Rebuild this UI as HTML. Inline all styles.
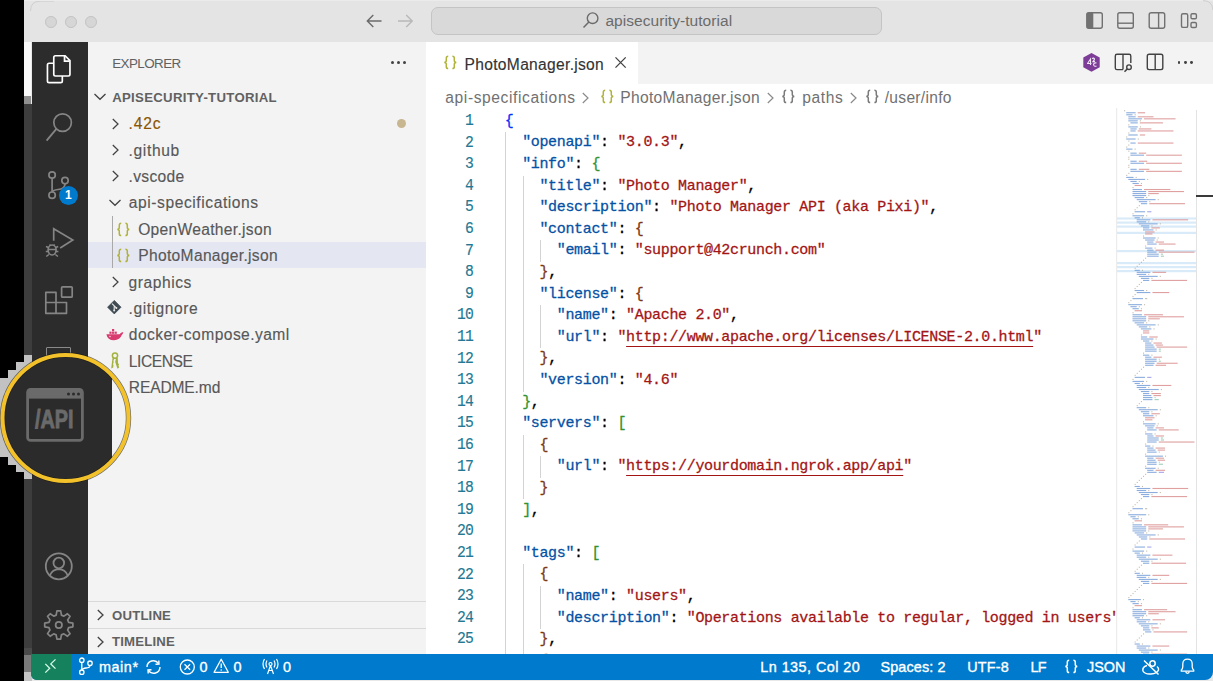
<!DOCTYPE html>
<html><head><meta charset="utf-8">
<style>
*{margin:0;padding:0;box-sizing:border-box}
html,body{width:1213px;height:681px;overflow:hidden;background:#e8e8e8;font-family:"Liberation Sans",sans-serif}
.a{position:absolute}
#black{left:0;top:0;width:24px;height:681px;background:#000}
#title{left:24px;top:0;width:1189px;height:41.5px;background:#e4e4e4}
#strip1{left:24px;top:42px;width:7px;height:55px;background:#fafafa}
#strip2{left:24px;top:96px;width:7px;height:8px;background:#8f8f8f}
#strip3{left:24px;top:104px;width:8px;height:544px;background:#3d3d3d}
#strip4{left:24px;top:648px;width:8px;height:7px;background:#4a4a4a}
#strip5{left:24px;top:655px;width:8px;height:17px;background:#7a7a7a}
#strip6{left:24px;top:672px;width:8px;height:9px;background:#c4c4c4}
#act{left:32px;top:42px;width:56px;height:612px;background:#2c2c2c}
#side{left:88px;top:42px;width:338px;height:612px;background:#f3f3f3}
#editor{left:426px;top:42px;width:787px;height:612px;background:#fff}
#tabs{left:426px;top:42px;width:787px;height:42px;background:#f3f3f3}
#tab{left:426px;top:42px;width:212px;height:42px;background:#fff}
.ln{position:absolute;left:440px;width:32.9px;text-align:right;font-family:"Liberation Mono",monospace;font-size:16px;letter-spacing:-0.9px;line-height:21.6px;height:21.6px;color:#237893;-webkit-text-stroke:0.15px currentColor;transform:scaleX(0.92);transform-origin:100% 50%}
.cl{position:absolute;left:504.8px;font-family:"Liberation Mono",monospace;font-size:15px;letter-spacing:-0.34px;line-height:21.6px;height:21.6px;white-space:pre;color:#000;-webkit-text-stroke:0.28px currentColor}
.k{color:#0451a5} .s{color:#a31515} .su{color:#a31515;text-decoration:underline;text-underline-offset:4.5px;text-decoration-thickness:1px}
.b1{color:#0431fa} .b2{color:#319331} .b3{color:#7b3814} .p{color:#000}
.ig{position:absolute;width:1px;background:#d3d3d3}
#status{left:30.5px;top:654px;width:1182.5px;height:25.5px;background:#007acc;border-bottom-right-radius:8px;border-bottom-left-radius:6px}
#remote{left:30.5px;top:654px;width:40.5px;height:25.5px;background:#16825d;border-bottom-left-radius:6px}
.st{position:absolute;top:658.5px;color:#fff;font-size:14.4px;line-height:17px;white-space:pre;-webkit-text-stroke:0.35px #fff}
.row{position:absolute;height:26.4px;font-size:15.6px;line-height:26.4px;color:#585858;white-space:pre;-webkit-text-stroke:0.15px currentColor}
</style></head><body>
<div class="a" id="black"></div>
<div class="a" id="title"></div>
<div class="a" style="left:45.0px;top:16px;width:11.8px;height:11.8px;border-radius:50%;background:#d6d6d6;border:1px solid #c2c2c2"></div>
<div class="a" style="left:65.1px;top:16px;width:11.8px;height:11.8px;border-radius:50%;background:#d6d6d6;border:1px solid #c2c2c2"></div>
<div class="a" style="left:85.0px;top:16px;width:11.8px;height:11.8px;border-radius:50%;background:#d6d6d6;border:1px solid #c2c2c2"></div>
<svg class="a" style="left:24px;top:0px" width="30" height="20" viewBox="0 0 30 20"><path d="M6.5 11 Q6.5 1.2 16 1.2 L30 1.2" fill="none" stroke="#cfcfcf" stroke-width="1"/></svg>
<div class="a" style="left:24px;top:0px;width:1189px;height:1px;background:#ebebeb"></div>
<svg class="a" style="left:1183px;top:0px" width="30" height="30" viewBox="0 0 30 30"><path d="M20 0.6 Q29.5 0.6 29.8 10" fill="none" stroke="#cfcfcf" stroke-width="1"/></svg>
<svg class="a" style="left:365px;top:13px" width="50" height="16" viewBox="0 0 50 16"><path d="M2.5 8 L16.5 8 M8.3 2 L2.3 8 L8.3 14" fill="none" stroke="#6b6b6b" stroke-width="1.4"/><path d="M33 8 L47 8 M41.2 2 L47.2 8 L41.2 14" fill="none" stroke="#b8b8b8" stroke-width="1.4"/></svg>
<div class="a" style="left:431px;top:7px;width:451px;height:28px;border-radius:7px;background:#d9d9d9;border:1px solid #c4c4c4"></div>
<svg class="a" style="left:582px;top:11px" width="18" height="18" viewBox="0 0 18 18"><circle cx="10.6" cy="7.2" r="5.3" fill="none" stroke="#6b6b6b" stroke-width="1.4"/><path d="M6.9 11 L1.5 16.6" stroke="#6b6b6b" stroke-width="1.5"/></svg>
<div class="a" style="left:605.4px;top:12px;font-size:15.5px;line-height:18px;color:#6b6b6b;letter-spacing:0.05px">apisecurity-tutorial</div>
<svg class="a" style="left:1080px;top:8px" width="125" height="26" viewBox="0 0 125 26"><rect x="6.8" y="4.8" width="15.5" height="15.5" rx="2" fill="none" stroke="#717171" stroke-width="1.4"/><rect x="6.8" y="4.8" width="6.5" height="15.5" rx="1" fill="#717171"/><rect x="37.8" y="4.8" width="15.5" height="15.5" rx="2" fill="none" stroke="#717171" stroke-width="1.4"/><path d="M37.8 15.2 L53.3 15.2" stroke="#717171" stroke-width="1.4"/><rect x="69.2" y="4.8" width="15.5" height="15.5" rx="2" fill="none" stroke="#717171" stroke-width="1.4"/><path d="M78.6 4.8 L78.6 20.3" stroke="#717171" stroke-width="1.4"/><rect x="101.5" y="5.8" width="6.2" height="13.6" rx="1.5" fill="none" stroke="#717171" stroke-width="1.4"/><rect x="111" y="5.8" width="5.4" height="5" rx="1.3" fill="none" stroke="#717171" stroke-width="1.4"/><rect x="111" y="14.5" width="5.4" height="5" rx="1.3" fill="none" stroke="#717171" stroke-width="1.4"/></svg>
<div class="a" id="strip1"></div><div class="a" id="strip2"></div><div class="a" id="strip3"></div><div class="a" id="strip4"></div><div class="a" id="strip5"></div><div class="a" id="strip6"></div>
<div class="a" id="act"></div>
<div class="a" id="side"></div>
<div class="a" id="editor"></div>
<div class="a" id="tabs"></div>
<div class="a" id="tab"></div>
<svg class="a" style="left:442.5px;top:54.9px" width="15" height="15" viewBox="0 0 15 15"><path d="M5.2 1.3 Q3.3 1.3 3.3 3.2 L3.3 5.6 Q3.3 7.3 1.3 7.4 Q3.3 7.5 3.3 9.2 L3.3 11.7 Q3.3 13.6 5.2 13.6" fill="none" stroke="#b0b33a" stroke-width="1.5"/><path d="M9.4 1.3 Q11.3 1.3 11.3 3.2 L11.3 5.6 Q11.3 7.3 13.3 7.4 Q11.3 7.5 11.3 9.2 L11.3 11.7 Q11.3 13.6 9.4 13.6" fill="none" stroke="#b0b33a" stroke-width="1.5"/></svg>
<div class="a" style="left:464.6px;top:55.8px;font-size:15.6px;line-height:18px;color:#333;letter-spacing:0.3px;-webkit-text-stroke:0.15px #333">PhotoManager.json</div>
<svg class="a" style="left:613px;top:55px" width="15" height="15" viewBox="0 0 15 15"><path d="M2.5 2.4 L12.7 12.6 M12.7 2.4 L2.5 12.6" stroke="#424242" stroke-width="1.3"/></svg>
<div class="a" style="left:445.3px;top:88.5px;font-size:15.6px;line-height:18px;color:#717171;letter-spacing:0.59px">api-specifications</div>
<svg class="a" style="left:581.0px;top:90.5px" width="10" height="14" viewBox="0 0 10 14"><path d="M1.8 2 L7 7 L1.8 12" fill="none" stroke="#8a8a8a" stroke-width="1.2"/></svg>
<svg class="a" style="left:599.5px;top:89.3px" width="15" height="15" viewBox="0 0 15 15"><path d="M5.2 1.3 Q3.3 1.3 3.3 3.2 L3.3 5.6 Q3.3 7.3 1.3 7.4 Q3.3 7.5 3.3 9.2 L3.3 11.7 Q3.3 13.6 5.2 13.6" fill="none" stroke="#b0b33a" stroke-width="1.5"/><path d="M9.4 1.3 Q11.3 1.3 11.3 3.2 L11.3 5.6 Q11.3 7.3 13.3 7.4 Q11.3 7.5 11.3 9.2 L11.3 11.7 Q11.3 13.6 9.4 13.6" fill="none" stroke="#b0b33a" stroke-width="1.5"/></svg>
<div class="a" style="left:620.3px;top:88.5px;font-size:15.6px;line-height:18px;color:#717171;letter-spacing:0.31px">PhotoManager.json</div>
<svg class="a" style="left:766.0px;top:90.5px" width="10" height="14" viewBox="0 0 10 14"><path d="M1.8 2 L7 7 L1.8 12" fill="none" stroke="#8a8a8a" stroke-width="1.2"/></svg>
<svg class="a" style="left:781.0px;top:89.3px" width="15" height="15" viewBox="0 0 15 15"><path d="M5.2 1.3 Q3.3 1.3 3.3 3.2 L3.3 5.6 Q3.3 7.3 1.3 7.4 Q3.3 7.5 3.3 9.2 L3.3 11.7 Q3.3 13.6 5.2 13.6" fill="none" stroke="#7a7a7a" stroke-width="1.5"/><path d="M9.4 1.3 Q11.3 1.3 11.3 3.2 L11.3 5.6 Q11.3 7.3 13.3 7.4 Q11.3 7.5 11.3 9.2 L11.3 11.7 Q11.3 13.6 9.4 13.6" fill="none" stroke="#7a7a7a" stroke-width="1.5"/></svg>
<div class="a" style="left:802.2px;top:88.5px;font-size:15.6px;line-height:18px;color:#717171;letter-spacing:0.6px">paths</div>
<svg class="a" style="left:849.0px;top:90.5px" width="10" height="14" viewBox="0 0 10 14"><path d="M1.8 2 L7 7 L1.8 12" fill="none" stroke="#8a8a8a" stroke-width="1.2"/></svg>
<svg class="a" style="left:864.5px;top:89.3px" width="15" height="15" viewBox="0 0 15 15"><path d="M5.2 1.3 Q3.3 1.3 3.3 3.2 L3.3 5.6 Q3.3 7.3 1.3 7.4 Q3.3 7.5 3.3 9.2 L3.3 11.7 Q3.3 13.6 5.2 13.6" fill="none" stroke="#7a7a7a" stroke-width="1.5"/><path d="M9.4 1.3 Q11.3 1.3 11.3 3.2 L11.3 5.6 Q11.3 7.3 13.3 7.4 Q11.3 7.5 11.3 9.2 L11.3 11.7 Q11.3 13.6 9.4 13.6" fill="none" stroke="#7a7a7a" stroke-width="1.5"/></svg>
<div class="a" style="left:884.7px;top:88.5px;font-size:15.6px;line-height:18px;color:#717171;letter-spacing:0.3px">/user/info</div>
<svg class="a" style="left:1082px;top:52px" width="20" height="21" viewBox="0 0 20 21"><path d="M9.5 1 L17.7 5.6 L17.7 15.2 L9.5 19.8 L1.3 15.2 L1.3 5.6 Z" fill="#7d3c98"/><path d="M5.5 11.5 L8.5 7 L8.5 13 M5 11.5 L9.5 11.5 M10 6.5 Q12 5.5 12.5 7 Q12 9 10.5 10 L13 9.5 M14.5 11 Q12 10.5 11.5 12.5 Q12 15 14.5 14" fill="none" stroke="#f0e6f5" stroke-width="1.1"/></svg>
<svg class="a" style="left:1113px;top:52px" width="22" height="22" viewBox="0 0 22 22"><path d="M17.8 11 L17.8 4 Q17.8 2.3 16.1 2.3 L4 2.3 Q2.3 2.3 2.3 4 L2.3 15.9 Q2.3 17.6 4 17.6 L10 17.6" fill="none" stroke="#424242" stroke-width="1.4"/><path d="M10 2.3 L10 17.6" stroke="#424242" stroke-width="1.4"/><circle cx="16" cy="15.2" r="2.3" fill="none" stroke="#424242" stroke-width="1.4"/><path d="M14.3 16.9 L11.5 19.7" stroke="#424242" stroke-width="1.5"/></svg>
<svg class="a" style="left:1145px;top:52px" width="20" height="20" viewBox="0 0 20 20"><rect x="2.3" y="2.3" width="15.5" height="15.3" rx="1.8" fill="none" stroke="#424242" stroke-width="1.4"/><path d="M10.2 2.3 L10.2 17.6" stroke="#424242" stroke-width="1.4"/></svg>
<div class="a" style="left:1177.7px;top:60.9px;width:2.8px;height:2.8px;border-radius:50%;background:#424242"></div>
<div class="a" style="left:1184.0px;top:60.9px;width:2.8px;height:2.8px;border-radius:50%;background:#424242"></div>
<div class="a" style="left:1190.2px;top:60.9px;width:2.8px;height:2.8px;border-radius:50%;background:#424242"></div>
<div class="ig" style="left:505.3px;top:132.3px;height:540.0px"></div>
<div class="ig" style="left:522.6px;top:175.5px;height:216.0px"></div>
<div class="ig" style="left:539.9px;top:240.3px;height:21.6px"></div>
<div class="ig" style="left:539.9px;top:305.1px;height:43.2px"></div>
<div class="ig" style="left:522.6px;top:434.7px;height:64.8px"></div>
<div class="ig" style="left:539.9px;top:456.3px;height:21.6px"></div>
<div class="ig" style="left:522.6px;top:564.3px;height:108.0px"></div>
<div class="ig" style="left:539.9px;top:585.9px;height:43.2px"></div>
<div class="ln" style="top:111.0px">1</div>
<div class="cl" style="top:110.7px"><span class="b1">{</span></div>
<div class="ln" style="top:132.6px">2</div>
<div class="cl" style="top:132.3px">  <span class="k">&quot;openapi&quot;</span><span class="p">: </span><span class="s">&quot;3.0.3&quot;</span><span class="p">,</span></div>
<div class="ln" style="top:154.2px">3</div>
<div class="cl" style="top:153.9px">  <span class="k">&quot;info&quot;</span><span class="p">: </span><span class="b2">{</span></div>
<div class="ln" style="top:175.8px">4</div>
<div class="cl" style="top:175.5px">    <span class="k">&quot;title&quot;</span><span class="p">: </span><span class="s">&quot;Photo Manager&quot;</span><span class="p">,</span></div>
<div class="ln" style="top:197.4px">5</div>
<div class="cl" style="top:197.1px">    <span class="k">&quot;description&quot;</span><span class="p">: </span><span class="s">&quot;Photo Manager API (aka Pixi)&quot;</span><span class="p">,</span></div>
<div class="ln" style="top:219.0px">6</div>
<div class="cl" style="top:218.7px">    <span class="k">&quot;contact&quot;</span><span class="p">: </span><span class="b3">{</span></div>
<div class="ln" style="top:240.6px">7</div>
<div class="cl" style="top:240.3px">      <span class="k">&quot;email&quot;</span><span class="p">: </span><span class="s">&quot;support@42crunch.com&quot;</span></div>
<div class="ln" style="top:262.2px">8</div>
<div class="cl" style="top:261.9px">    <span class="b3">}</span><span class="p">,</span></div>
<div class="ln" style="top:283.8px">9</div>
<div class="cl" style="top:283.5px">    <span class="k">&quot;license&quot;</span><span class="p">: </span><span class="b3">{</span></div>
<div class="ln" style="top:305.4px">10</div>
<div class="cl" style="top:305.1px">      <span class="k">&quot;name&quot;</span><span class="p">: </span><span class="s">&quot;Apache 2.0&quot;</span><span class="p">,</span></div>
<div class="ln" style="top:327.0px">11</div>
<div class="cl" style="top:326.7px">      <span class="k">&quot;url&quot;</span><span class="p">: </span><span class="s">&quot;</span><span class="su">http://www.apache.org/licenses/LICENSE-2.0.html</span><span class="s">&quot;</span></div>
<div class="ln" style="top:348.6px">12</div>
<div class="cl" style="top:348.3px">    <span class="b3">}</span><span class="p">,</span></div>
<div class="ln" style="top:370.2px">13</div>
<div class="cl" style="top:369.9px">    <span class="k">&quot;version&quot;</span><span class="p">: </span><span class="s">&quot;4.6&quot;</span></div>
<div class="ln" style="top:391.8px">14</div>
<div class="cl" style="top:391.5px">  <span class="b2">}</span><span class="p">,</span></div>
<div class="ln" style="top:413.4px">15</div>
<div class="cl" style="top:413.1px">  <span class="k">&quot;servers&quot;</span><span class="p">: </span><span class="b2">[</span></div>
<div class="ln" style="top:435.0px">16</div>
<div class="cl" style="top:434.7px">    <span class="b3">{</span></div>
<div class="ln" style="top:456.6px">17</div>
<div class="cl" style="top:456.3px">      <span class="k">&quot;url&quot;</span><span class="p">: </span><span class="s">&quot;</span><span class="su">https://yourdomain.ngrok.app/api</span><span class="s">&quot;</span></div>
<div class="ln" style="top:478.2px">18</div>
<div class="cl" style="top:477.9px">    <span class="b3">}</span></div>
<div class="ln" style="top:499.8px">19</div>
<div class="cl" style="top:499.5px">  <span class="b2">]</span><span class="p">,</span></div>
<div class="ln" style="top:521.4px">20</div>
<div class="cl" style="top:521.1px"></div>
<div class="ln" style="top:543.0px">21</div>
<div class="cl" style="top:542.7px">  <span class="k">&quot;tags&quot;</span><span class="p">: </span><span class="b2">[</span></div>
<div class="ln" style="top:564.6px">22</div>
<div class="cl" style="top:564.3px">    <span class="b3">{</span></div>
<div class="ln" style="top:586.2px">23</div>
<div class="cl" style="top:585.9px">      <span class="k">&quot;name&quot;</span><span class="p">: </span><span class="s">&quot;users&quot;</span><span class="p">,</span></div>
<div class="ln" style="top:607.8px">24</div>
<div class="cl" style="top:607.5px">      <span class="k">&quot;description&quot;</span><span class="p">: </span><span class="s">&quot;Operations available to regular, logged in users&quot;</span></div>
<div class="ln" style="top:629.4px">25</div>
<div class="cl" style="top:629.1px">    <span class="b3">}</span><span class="p">,</span></div>
<div class="ln" style="top:651.0px">26</div>
<div class="cl" style="top:650.7px">    <span class="b3">{</span></div>
<div class="a" style="left:1116px;top:84px;width:97px;height:570px;background:#fff"></div>
<svg class="a" style="left:1116px;top:108px" width="80" height="546" viewBox="0 0 80 546">
<rect x="0" y="0" width="1.2" height="546" fill="#ececec"/>
<rect x="1" y="109.4" width="79" height="2.2" fill="#d9ebf9"/>
<rect x="1" y="113.5" width="79" height="2.2" fill="#d9ebf9"/>
<rect x="1" y="117.5" width="79" height="2.2" fill="#d9ebf9"/>
<rect x="1" y="123.8" width="79" height="2.2" fill="#d9ebf9"/>
<rect x="1" y="142.0" width="79" height="2.2" fill="#d9ebf9"/>
<rect x="1" y="154.0" width="79" height="2.2" fill="#d9ebf9"/>
<rect x="1" y="158.0" width="79" height="2.2" fill="#d9ebf9"/>
<rect x="1" y="162.0" width="79" height="2.2" fill="#d9ebf9"/>
<rect x="8.10" y="2.20" width="1.05" height="1.1" fill="#9a8a70" fill-opacity="0.6"/>
<rect x="10.20" y="4.22" width="9.45" height="1.1" fill="#3f78c8" fill-opacity="0.6"/>
<rect x="21.75" y="4.22" width="7.35" height="1.1" fill="#cc6060" fill-opacity="0.6"/>
<rect x="10.20" y="6.24" width="6.30" height="1.1" fill="#3f78c8" fill-opacity="0.6"/>
<rect x="18.60" y="6.24" width="1.05" height="1.1" fill="#9a8a70" fill-opacity="0.6"/>
<rect x="12.30" y="8.26" width="7.35" height="1.1" fill="#3f78c8" fill-opacity="0.6"/>
<rect x="21.75" y="8.26" width="15.75" height="1.1" fill="#cc6060" fill-opacity="0.6"/>
<rect x="12.30" y="10.28" width="13.65" height="1.1" fill="#3f78c8" fill-opacity="0.6"/>
<rect x="28.05" y="10.28" width="31.50" height="1.1" fill="#cc6060" fill-opacity="0.6"/>
<rect x="12.30" y="12.30" width="9.45" height="1.1" fill="#3f78c8" fill-opacity="0.6"/>
<rect x="23.85" y="12.30" width="1.05" height="1.1" fill="#9a8a70" fill-opacity="0.6"/>
<rect x="14.40" y="14.32" width="7.35" height="1.1" fill="#3f78c8" fill-opacity="0.6"/>
<rect x="23.85" y="14.32" width="23.10" height="1.1" fill="#cc6060" fill-opacity="0.6"/>
<rect x="12.30" y="16.34" width="1.05" height="1.1" fill="#9a8a70" fill-opacity="0.6"/>
<rect x="12.30" y="18.36" width="9.45" height="1.1" fill="#3f78c8" fill-opacity="0.6"/>
<rect x="23.85" y="18.36" width="1.05" height="1.1" fill="#9a8a70" fill-opacity="0.6"/>
<rect x="14.40" y="20.38" width="6.30" height="1.1" fill="#3f78c8" fill-opacity="0.6"/>
<rect x="22.80" y="20.38" width="12.60" height="1.1" fill="#cc6060" fill-opacity="0.6"/>
<rect x="14.40" y="22.40" width="5.25" height="1.1" fill="#3f78c8" fill-opacity="0.6"/>
<rect x="21.75" y="22.40" width="35.70" height="1.1" fill="#cc6060" fill-opacity="0.6"/>
<rect x="12.30" y="24.42" width="1.05" height="1.1" fill="#9a8a70" fill-opacity="0.6"/>
<rect x="12.30" y="26.44" width="9.45" height="1.1" fill="#3f78c8" fill-opacity="0.6"/>
<rect x="23.85" y="26.44" width="5.25" height="1.1" fill="#cc6060" fill-opacity="0.6"/>
<rect x="10.20" y="28.46" width="1.05" height="1.1" fill="#9a8a70" fill-opacity="0.6"/>
<rect x="10.20" y="30.48" width="9.45" height="1.1" fill="#3f78c8" fill-opacity="0.6"/>
<rect x="21.75" y="30.48" width="1.05" height="1.1" fill="#9a8a70" fill-opacity="0.6"/>
<rect x="12.30" y="32.50" width="1.05" height="1.1" fill="#9a8a70" fill-opacity="0.6"/>
<rect x="14.40" y="34.52" width="5.25" height="1.1" fill="#3f78c8" fill-opacity="0.6"/>
<rect x="21.75" y="34.52" width="35.70" height="1.1" fill="#cc6060" fill-opacity="0.6"/>
<rect x="12.30" y="36.54" width="1.05" height="1.1" fill="#9a8a70" fill-opacity="0.6"/>
<rect x="10.20" y="38.56" width="1.05" height="1.1" fill="#9a8a70" fill-opacity="0.6"/>
<rect x="10.20" y="40.58" width="6.30" height="1.1" fill="#3f78c8" fill-opacity="0.6"/>
<rect x="18.60" y="40.58" width="1.05" height="1.1" fill="#9a8a70" fill-opacity="0.6"/>
<rect x="12.30" y="42.60" width="1.05" height="1.1" fill="#9a8a70" fill-opacity="0.6"/>
<rect x="14.40" y="44.62" width="6.30" height="1.1" fill="#3f78c8" fill-opacity="0.6"/>
<rect x="22.80" y="44.62" width="7.35" height="1.1" fill="#cc6060" fill-opacity="0.6"/>
<rect x="14.40" y="46.64" width="13.65" height="1.1" fill="#3f78c8" fill-opacity="0.6"/>
<rect x="30.15" y="46.64" width="35.70" height="1.1" fill="#cc6060" fill-opacity="0.6"/>
<rect x="12.30" y="48.66" width="1.05" height="1.1" fill="#9a8a70" fill-opacity="0.6"/>
<rect x="12.30" y="50.68" width="1.05" height="1.1" fill="#9a8a70" fill-opacity="0.6"/>
<rect x="14.40" y="52.70" width="6.30" height="1.1" fill="#3f78c8" fill-opacity="0.6"/>
<rect x="22.80" y="52.70" width="8.40" height="1.1" fill="#cc6060" fill-opacity="0.6"/>
<rect x="14.40" y="54.72" width="13.65" height="1.1" fill="#3f78c8" fill-opacity="0.6"/>
<rect x="30.15" y="54.72" width="35.70" height="1.1" fill="#cc6060" fill-opacity="0.6"/>
<rect x="12.30" y="56.74" width="1.05" height="1.1" fill="#9a8a70" fill-opacity="0.6"/>
<rect x="12.30" y="58.76" width="1.05" height="1.1" fill="#9a8a70" fill-opacity="0.6"/>
<rect x="14.40" y="60.78" width="6.30" height="1.1" fill="#3f78c8" fill-opacity="0.6"/>
<rect x="22.80" y="60.78" width="10.50" height="1.1" fill="#cc6060" fill-opacity="0.6"/>
<rect x="14.40" y="62.80" width="13.65" height="1.1" fill="#3f78c8" fill-opacity="0.6"/>
<rect x="30.15" y="62.80" width="35.70" height="1.1" fill="#cc6060" fill-opacity="0.6"/>
<rect x="12.30" y="64.82" width="1.05" height="1.1" fill="#9a8a70" fill-opacity="0.6"/>
<rect x="10.20" y="66.84" width="1.05" height="1.1" fill="#9a8a70" fill-opacity="0.6"/>
<rect x="10.20" y="68.86" width="7.35" height="1.1" fill="#3f78c8" fill-opacity="0.6"/>
<rect x="19.65" y="68.86" width="1.05" height="1.1" fill="#9a8a70" fill-opacity="0.6"/>
<rect x="12.30" y="70.88" width="16.80" height="1.1" fill="#3f78c8" fill-opacity="0.6"/>
<rect x="31.20" y="70.88" width="1.05" height="1.1" fill="#9a8a70" fill-opacity="0.6"/>
<rect x="14.40" y="72.90" width="6.30" height="1.1" fill="#3f78c8" fill-opacity="0.6"/>
<rect x="22.80" y="72.90" width="1.05" height="1.1" fill="#9a8a70" fill-opacity="0.6"/>
<rect x="16.50" y="74.92" width="6.30" height="1.1" fill="#3f78c8" fill-opacity="0.6"/>
<rect x="24.90" y="74.92" width="1.05" height="1.1" fill="#9a8a70" fill-opacity="0.6"/>
<rect x="18.60" y="76.94" width="7.35" height="1.1" fill="#cc6060" fill-opacity="0.6"/>
<rect x="16.50" y="78.96" width="1.05" height="1.1" fill="#9a8a70" fill-opacity="0.6"/>
<rect x="16.50" y="80.98" width="9.45" height="1.1" fill="#3f78c8" fill-opacity="0.6"/>
<rect x="28.05" y="80.98" width="26.25" height="1.1" fill="#cc6060" fill-opacity="0.6"/>
<rect x="16.50" y="83.00" width="13.65" height="1.1" fill="#3f78c8" fill-opacity="0.6"/>
<rect x="32.25" y="83.00" width="35.70" height="1.1" fill="#cc6060" fill-opacity="0.6"/>
<rect x="16.50" y="85.02" width="13.65" height="1.1" fill="#3f78c8" fill-opacity="0.6"/>
<rect x="32.25" y="85.02" width="10.50" height="1.1" fill="#cc6060" fill-opacity="0.6"/>
<rect x="16.50" y="87.04" width="13.65" height="1.1" fill="#3f78c8" fill-opacity="0.6"/>
<rect x="32.25" y="87.04" width="1.05" height="1.1" fill="#9a8a70" fill-opacity="0.6"/>
<rect x="18.60" y="89.06" width="9.45" height="1.1" fill="#3f78c8" fill-opacity="0.6"/>
<rect x="30.15" y="89.06" width="1.05" height="1.1" fill="#9a8a70" fill-opacity="0.6"/>
<rect x="20.70" y="91.08" width="18.90" height="1.1" fill="#3f78c8" fill-opacity="0.6"/>
<rect x="41.70" y="91.08" width="1.05" height="1.1" fill="#9a8a70" fill-opacity="0.6"/>
<rect x="22.80" y="93.10" width="8.40" height="1.1" fill="#3f78c8" fill-opacity="0.6"/>
<rect x="33.30" y="93.10" width="1.05" height="1.1" fill="#9a8a70" fill-opacity="0.6"/>
<rect x="24.90" y="95.12" width="6.30" height="1.1" fill="#3f78c8" fill-opacity="0.6"/>
<rect x="33.30" y="95.12" width="35.70" height="1.1" fill="#cc6060" fill-opacity="0.6"/>
<rect x="22.80" y="97.14" width="1.05" height="1.1" fill="#9a8a70" fill-opacity="0.6"/>
<rect x="20.70" y="99.16" width="1.05" height="1.1" fill="#9a8a70" fill-opacity="0.6"/>
<rect x="18.60" y="101.18" width="1.05" height="1.1" fill="#9a8a70" fill-opacity="0.6"/>
<rect x="18.60" y="103.20" width="10.50" height="1.1" fill="#3f78c8" fill-opacity="0.6"/>
<rect x="31.20" y="103.20" width="4.20" height="1.1" fill="#6a6ae0" fill-opacity="0.6"/>
<rect x="16.50" y="105.22" width="1.05" height="1.1" fill="#9a8a70" fill-opacity="0.6"/>
<rect x="16.50" y="107.24" width="11.55" height="1.1" fill="#3f78c8" fill-opacity="0.6"/>
<rect x="30.15" y="107.24" width="1.05" height="1.1" fill="#9a8a70" fill-opacity="0.6"/>
<rect x="18.60" y="109.26" width="5.25" height="1.1" fill="#3f78c8" fill-opacity="0.6"/>
<rect x="25.95" y="109.26" width="1.05" height="1.1" fill="#9a8a70" fill-opacity="0.6"/>
<rect x="20.70" y="111.28" width="13.65" height="1.1" fill="#3f78c8" fill-opacity="0.6"/>
<rect x="36.45" y="111.28" width="35.70" height="1.1" fill="#cc6060" fill-opacity="0.6"/>
<rect x="20.70" y="113.30" width="9.45" height="1.1" fill="#3f78c8" fill-opacity="0.6"/>
<rect x="32.25" y="113.30" width="1.05" height="1.1" fill="#9a8a70" fill-opacity="0.6"/>
<rect x="22.80" y="115.32" width="18.90" height="1.1" fill="#3f78c8" fill-opacity="0.6"/>
<rect x="43.80" y="115.32" width="1.05" height="1.1" fill="#9a8a70" fill-opacity="0.6"/>
<rect x="24.90" y="117.34" width="8.40" height="1.1" fill="#3f78c8" fill-opacity="0.6"/>
<rect x="35.40" y="117.34" width="1.05" height="1.1" fill="#9a8a70" fill-opacity="0.6"/>
<rect x="27.00" y="119.36" width="6.30" height="1.1" fill="#3f78c8" fill-opacity="0.6"/>
<rect x="35.40" y="119.36" width="8.40" height="1.1" fill="#cc6060" fill-opacity="0.6"/>
<rect x="27.00" y="121.38" width="10.50" height="1.1" fill="#3f78c8" fill-opacity="0.6"/>
<rect x="39.60" y="121.38" width="1.05" height="1.1" fill="#9a8a70" fill-opacity="0.6"/>
<rect x="29.10" y="123.40" width="9.45" height="1.1" fill="#cc6060" fill-opacity="0.6"/>
<rect x="29.10" y="125.42" width="7.35" height="1.1" fill="#cc6060" fill-opacity="0.6"/>
<rect x="27.00" y="127.44" width="1.05" height="1.1" fill="#9a8a70" fill-opacity="0.6"/>
<rect x="27.00" y="129.46" width="12.60" height="1.1" fill="#3f78c8" fill-opacity="0.6"/>
<rect x="41.70" y="129.46" width="1.05" height="1.1" fill="#9a8a70" fill-opacity="0.6"/>
<rect x="29.10" y="131.48" width="9.45" height="1.1" fill="#3f78c8" fill-opacity="0.6"/>
<rect x="40.65" y="131.48" width="1.05" height="1.1" fill="#9a8a70" fill-opacity="0.6"/>
<rect x="31.20" y="133.50" width="6.30" height="1.1" fill="#3f78c8" fill-opacity="0.6"/>
<rect x="39.60" y="133.50" width="8.40" height="1.1" fill="#cc6060" fill-opacity="0.6"/>
<rect x="31.20" y="135.52" width="9.45" height="1.1" fill="#3f78c8" fill-opacity="0.6"/>
<rect x="42.75" y="135.52" width="16.80" height="1.1" fill="#cc6060" fill-opacity="0.6"/>
<rect x="29.10" y="137.54" width="1.05" height="1.1" fill="#9a8a70" fill-opacity="0.6"/>
<rect x="29.10" y="139.56" width="7.35" height="1.1" fill="#3f78c8" fill-opacity="0.6"/>
<rect x="38.55" y="139.56" width="1.05" height="1.1" fill="#9a8a70" fill-opacity="0.6"/>
<rect x="31.20" y="141.58" width="6.30" height="1.1" fill="#3f78c8" fill-opacity="0.6"/>
<rect x="39.60" y="141.58" width="8.40" height="1.1" fill="#cc6060" fill-opacity="0.6"/>
<rect x="31.20" y="143.60" width="9.45" height="1.1" fill="#3f78c8" fill-opacity="0.6"/>
<rect x="42.75" y="143.60" width="35.70" height="1.1" fill="#cc6060" fill-opacity="0.6"/>
<rect x="31.20" y="145.62" width="11.55" height="1.1" fill="#3f78c8" fill-opacity="0.6"/>
<rect x="44.85" y="145.62" width="2.10" height="1.1" fill="#5fb08a" fill-opacity="0.6"/>
<rect x="31.20" y="147.64" width="11.55" height="1.1" fill="#3f78c8" fill-opacity="0.6"/>
<rect x="44.85" y="147.64" width="3.15" height="1.1" fill="#5fb08a" fill-opacity="0.6"/>
<rect x="29.10" y="149.66" width="1.05" height="1.1" fill="#9a8a70" fill-opacity="0.6"/>
<rect x="27.00" y="151.68" width="1.05" height="1.1" fill="#9a8a70" fill-opacity="0.6"/>
<rect x="24.90" y="153.70" width="1.05" height="1.1" fill="#9a8a70" fill-opacity="0.6"/>
<rect x="22.80" y="155.72" width="1.05" height="1.1" fill="#9a8a70" fill-opacity="0.6"/>
<rect x="20.70" y="157.74" width="1.05" height="1.1" fill="#9a8a70" fill-opacity="0.6"/>
<rect x="18.60" y="159.76" width="1.05" height="1.1" fill="#9a8a70" fill-opacity="0.6"/>
<rect x="18.60" y="161.78" width="5.25" height="1.1" fill="#3f78c8" fill-opacity="0.6"/>
<rect x="25.95" y="161.78" width="1.05" height="1.1" fill="#9a8a70" fill-opacity="0.6"/>
<rect x="20.70" y="163.80" width="13.65" height="1.1" fill="#3f78c8" fill-opacity="0.6"/>
<rect x="36.45" y="163.80" width="13.65" height="1.1" fill="#cc6060" fill-opacity="0.6"/>
<rect x="20.70" y="165.82" width="9.45" height="1.1" fill="#3f78c8" fill-opacity="0.6"/>
<rect x="32.25" y="165.82" width="1.05" height="1.1" fill="#9a8a70" fill-opacity="0.6"/>
<rect x="22.80" y="167.84" width="18.90" height="1.1" fill="#3f78c8" fill-opacity="0.6"/>
<rect x="43.80" y="167.84" width="1.05" height="1.1" fill="#9a8a70" fill-opacity="0.6"/>
<rect x="24.90" y="169.86" width="8.40" height="1.1" fill="#3f78c8" fill-opacity="0.6"/>
<rect x="35.40" y="169.86" width="1.05" height="1.1" fill="#9a8a70" fill-opacity="0.6"/>
<rect x="27.00" y="171.88" width="6.30" height="1.1" fill="#3f78c8" fill-opacity="0.6"/>
<rect x="35.40" y="171.88" width="35.70" height="1.1" fill="#cc6060" fill-opacity="0.6"/>
<rect x="24.90" y="173.90" width="1.05" height="1.1" fill="#9a8a70" fill-opacity="0.6"/>
<rect x="22.80" y="175.92" width="1.05" height="1.1" fill="#9a8a70" fill-opacity="0.6"/>
<rect x="20.70" y="177.94" width="1.05" height="1.1" fill="#9a8a70" fill-opacity="0.6"/>
<rect x="18.60" y="179.96" width="1.05" height="1.1" fill="#9a8a70" fill-opacity="0.6"/>
<rect x="18.60" y="181.98" width="9.45" height="1.1" fill="#3f78c8" fill-opacity="0.6"/>
<rect x="30.15" y="181.98" width="1.05" height="1.1" fill="#9a8a70" fill-opacity="0.6"/>
<rect x="20.70" y="184.00" width="13.65" height="1.1" fill="#3f78c8" fill-opacity="0.6"/>
<rect x="36.45" y="184.00" width="16.80" height="1.1" fill="#cc6060" fill-opacity="0.6"/>
<rect x="18.60" y="186.02" width="1.05" height="1.1" fill="#9a8a70" fill-opacity="0.6"/>
<rect x="16.50" y="188.04" width="1.05" height="1.1" fill="#9a8a70" fill-opacity="0.6"/>
<rect x="16.50" y="190.06" width="10.50" height="1.1" fill="#3f78c8" fill-opacity="0.6"/>
<rect x="29.10" y="190.06" width="1.05" height="1.1" fill="#9a8a70" fill-opacity="0.6"/>
<rect x="30.15" y="190.06" width="1.05" height="1.1" fill="#9a8a70" fill-opacity="0.6"/>
<rect x="14.40" y="192.08" width="1.05" height="1.1" fill="#9a8a70" fill-opacity="0.6"/>
<rect x="12.30" y="194.10" width="1.05" height="1.1" fill="#9a8a70" fill-opacity="0.6"/>
<rect x="12.30" y="196.12" width="13.65" height="1.1" fill="#3f78c8" fill-opacity="0.6"/>
<rect x="28.05" y="196.12" width="1.05" height="1.1" fill="#9a8a70" fill-opacity="0.6"/>
<rect x="14.40" y="198.14" width="6.30" height="1.1" fill="#3f78c8" fill-opacity="0.6"/>
<rect x="22.80" y="198.14" width="1.05" height="1.1" fill="#9a8a70" fill-opacity="0.6"/>
<rect x="16.50" y="200.16" width="6.30" height="1.1" fill="#3f78c8" fill-opacity="0.6"/>
<rect x="24.90" y="200.16" width="1.05" height="1.1" fill="#9a8a70" fill-opacity="0.6"/>
<rect x="18.60" y="202.18" width="7.35" height="1.1" fill="#cc6060" fill-opacity="0.6"/>
<rect x="16.50" y="204.20" width="1.05" height="1.1" fill="#9a8a70" fill-opacity="0.6"/>
<rect x="16.50" y="206.22" width="9.45" height="1.1" fill="#3f78c8" fill-opacity="0.6"/>
<rect x="28.05" y="206.22" width="18.90" height="1.1" fill="#cc6060" fill-opacity="0.6"/>
<rect x="16.50" y="208.24" width="13.65" height="1.1" fill="#3f78c8" fill-opacity="0.6"/>
<rect x="32.25" y="208.24" width="35.70" height="1.1" fill="#cc6060" fill-opacity="0.6"/>
<rect x="16.50" y="210.26" width="13.65" height="1.1" fill="#3f78c8" fill-opacity="0.6"/>
<rect x="32.25" y="210.26" width="11.55" height="1.1" fill="#cc6060" fill-opacity="0.6"/>
<rect x="16.50" y="212.28" width="13.65" height="1.1" fill="#3f78c8" fill-opacity="0.6"/>
<rect x="32.25" y="212.28" width="1.05" height="1.1" fill="#9a8a70" fill-opacity="0.6"/>
<rect x="18.60" y="214.30" width="9.45" height="1.1" fill="#3f78c8" fill-opacity="0.6"/>
<rect x="30.15" y="214.30" width="1.05" height="1.1" fill="#9a8a70" fill-opacity="0.6"/>
<rect x="20.70" y="216.32" width="18.90" height="1.1" fill="#3f78c8" fill-opacity="0.6"/>
<rect x="41.70" y="216.32" width="1.05" height="1.1" fill="#9a8a70" fill-opacity="0.6"/>
<rect x="22.80" y="218.34" width="8.40" height="1.1" fill="#3f78c8" fill-opacity="0.6"/>
<rect x="33.30" y="218.34" width="1.05" height="1.1" fill="#9a8a70" fill-opacity="0.6"/>
<rect x="24.90" y="220.36" width="10.50" height="1.1" fill="#3f78c8" fill-opacity="0.6"/>
<rect x="37.50" y="220.36" width="1.05" height="1.1" fill="#9a8a70" fill-opacity="0.6"/>
<rect x="27.00" y="222.38" width="6.30" height="1.1" fill="#cc6060" fill-opacity="0.6"/>
<rect x="27.00" y="224.40" width="6.30" height="1.1" fill="#cc6060" fill-opacity="0.6"/>
<rect x="24.90" y="226.42" width="1.05" height="1.1" fill="#9a8a70" fill-opacity="0.6"/>
<rect x="24.90" y="228.44" width="6.30" height="1.1" fill="#3f78c8" fill-opacity="0.6"/>
<rect x="33.30" y="228.44" width="8.40" height="1.1" fill="#cc6060" fill-opacity="0.6"/>
<rect x="24.90" y="230.46" width="12.60" height="1.1" fill="#3f78c8" fill-opacity="0.6"/>
<rect x="39.60" y="230.46" width="1.05" height="1.1" fill="#9a8a70" fill-opacity="0.6"/>
<rect x="27.00" y="232.48" width="6.30" height="1.1" fill="#3f78c8" fill-opacity="0.6"/>
<rect x="35.40" y="232.48" width="1.05" height="1.1" fill="#9a8a70" fill-opacity="0.6"/>
<rect x="29.10" y="234.50" width="6.30" height="1.1" fill="#3f78c8" fill-opacity="0.6"/>
<rect x="37.50" y="234.50" width="8.40" height="1.1" fill="#cc6060" fill-opacity="0.6"/>
<rect x="29.10" y="236.52" width="8.40" height="1.1" fill="#3f78c8" fill-opacity="0.6"/>
<rect x="39.60" y="236.52" width="7.35" height="1.1" fill="#cc6060" fill-opacity="0.6"/>
<rect x="29.10" y="238.54" width="9.45" height="1.1" fill="#3f78c8" fill-opacity="0.6"/>
<rect x="40.65" y="238.54" width="30.45" height="1.1" fill="#cc6060" fill-opacity="0.6"/>
<rect x="29.10" y="240.56" width="11.55" height="1.1" fill="#3f78c8" fill-opacity="0.6"/>
<rect x="42.75" y="240.56" width="2.10" height="1.1" fill="#5fb08a" fill-opacity="0.6"/>
<rect x="29.10" y="242.58" width="11.55" height="1.1" fill="#3f78c8" fill-opacity="0.6"/>
<rect x="42.75" y="242.58" width="2.10" height="1.1" fill="#5fb08a" fill-opacity="0.6"/>
<rect x="27.00" y="244.60" width="1.05" height="1.1" fill="#9a8a70" fill-opacity="0.6"/>
<rect x="27.00" y="246.62" width="6.30" height="1.1" fill="#3f78c8" fill-opacity="0.6"/>
<rect x="35.40" y="246.62" width="1.05" height="1.1" fill="#9a8a70" fill-opacity="0.6"/>
<rect x="29.10" y="248.64" width="6.30" height="1.1" fill="#3f78c8" fill-opacity="0.6"/>
<rect x="37.50" y="248.64" width="8.40" height="1.1" fill="#cc6060" fill-opacity="0.6"/>
<rect x="29.10" y="250.66" width="11.55" height="1.1" fill="#3f78c8" fill-opacity="0.6"/>
<rect x="42.75" y="250.66" width="1.05" height="1.1" fill="#5fb08a" fill-opacity="0.6"/>
<rect x="29.10" y="252.68" width="11.55" height="1.1" fill="#3f78c8" fill-opacity="0.6"/>
<rect x="42.75" y="252.68" width="2.10" height="1.1" fill="#5fb08a" fill-opacity="0.6"/>
<rect x="29.10" y="254.70" width="9.45" height="1.1" fill="#3f78c8" fill-opacity="0.6"/>
<rect x="40.65" y="254.70" width="21.00" height="1.1" fill="#cc6060" fill-opacity="0.6"/>
<rect x="29.10" y="256.72" width="8.40" height="1.1" fill="#3f78c8" fill-opacity="0.6"/>
<rect x="39.60" y="256.72" width="10.50" height="1.1" fill="#cc6060" fill-opacity="0.6"/>
<rect x="27.00" y="258.74" width="1.05" height="1.1" fill="#9a8a70" fill-opacity="0.6"/>
<rect x="24.90" y="260.76" width="1.05" height="1.1" fill="#9a8a70" fill-opacity="0.6"/>
<rect x="22.80" y="262.78" width="1.05" height="1.1" fill="#9a8a70" fill-opacity="0.6"/>
<rect x="20.70" y="264.80" width="1.05" height="1.1" fill="#9a8a70" fill-opacity="0.6"/>
<rect x="18.60" y="266.82" width="1.05" height="1.1" fill="#9a8a70" fill-opacity="0.6"/>
<rect x="18.60" y="268.84" width="10.50" height="1.1" fill="#3f78c8" fill-opacity="0.6"/>
<rect x="31.20" y="268.84" width="4.20" height="1.1" fill="#6a6ae0" fill-opacity="0.6"/>
<rect x="16.50" y="270.86" width="1.05" height="1.1" fill="#9a8a70" fill-opacity="0.6"/>
<rect x="16.50" y="272.88" width="11.55" height="1.1" fill="#3f78c8" fill-opacity="0.6"/>
<rect x="30.15" y="272.88" width="1.05" height="1.1" fill="#9a8a70" fill-opacity="0.6"/>
<rect x="18.60" y="274.90" width="5.25" height="1.1" fill="#3f78c8" fill-opacity="0.6"/>
<rect x="25.95" y="274.90" width="1.05" height="1.1" fill="#9a8a70" fill-opacity="0.6"/>
<rect x="20.70" y="276.92" width="13.65" height="1.1" fill="#3f78c8" fill-opacity="0.6"/>
<rect x="36.45" y="276.92" width="18.90" height="1.1" fill="#cc6060" fill-opacity="0.6"/>
<rect x="20.70" y="278.94" width="9.45" height="1.1" fill="#3f78c8" fill-opacity="0.6"/>
<rect x="32.25" y="278.94" width="1.05" height="1.1" fill="#9a8a70" fill-opacity="0.6"/>
<rect x="22.80" y="280.96" width="19.95" height="1.1" fill="#3f78c8" fill-opacity="0.6"/>
<rect x="44.85" y="280.96" width="1.05" height="1.1" fill="#9a8a70" fill-opacity="0.6"/>
<rect x="24.90" y="282.98" width="8.40" height="1.1" fill="#3f78c8" fill-opacity="0.6"/>
<rect x="35.40" y="282.98" width="1.05" height="1.1" fill="#9a8a70" fill-opacity="0.6"/>
<rect x="27.00" y="285.00" width="6.30" height="1.1" fill="#3f78c8" fill-opacity="0.6"/>
<rect x="35.40" y="285.00" width="9.45" height="1.1" fill="#cc6060" fill-opacity="0.6"/>
<rect x="27.00" y="287.02" width="8.40" height="1.1" fill="#3f78c8" fill-opacity="0.6"/>
<rect x="37.50" y="287.02" width="7.35" height="1.1" fill="#cc6060" fill-opacity="0.6"/>
<rect x="27.00" y="289.04" width="9.45" height="1.1" fill="#3f78c8" fill-opacity="0.6"/>
<rect x="38.55" y="289.04" width="1.05" height="1.1" fill="#5fb08a" fill-opacity="0.6"/>
<rect x="27.00" y="291.06" width="9.45" height="1.1" fill="#3f78c8" fill-opacity="0.6"/>
<rect x="38.55" y="291.06" width="4.20" height="1.1" fill="#5fb08a" fill-opacity="0.6"/>
<rect x="24.90" y="293.08" width="1.05" height="1.1" fill="#9a8a70" fill-opacity="0.6"/>
<rect x="22.80" y="295.10" width="1.05" height="1.1" fill="#9a8a70" fill-opacity="0.6"/>
<rect x="20.70" y="297.12" width="1.05" height="1.1" fill="#9a8a70" fill-opacity="0.6"/>
<rect x="20.70" y="299.14" width="9.45" height="1.1" fill="#3f78c8" fill-opacity="0.6"/>
<rect x="32.25" y="299.14" width="1.05" height="1.1" fill="#9a8a70" fill-opacity="0.6"/>
<rect x="22.80" y="301.16" width="18.90" height="1.1" fill="#3f78c8" fill-opacity="0.6"/>
<rect x="43.80" y="301.16" width="1.05" height="1.1" fill="#9a8a70" fill-opacity="0.6"/>
<rect x="24.90" y="303.18" width="8.40" height="1.1" fill="#3f78c8" fill-opacity="0.6"/>
<rect x="35.40" y="303.18" width="1.05" height="1.1" fill="#9a8a70" fill-opacity="0.6"/>
<rect x="27.00" y="305.20" width="6.30" height="1.1" fill="#3f78c8" fill-opacity="0.6"/>
<rect x="35.40" y="305.20" width="8.40" height="1.1" fill="#cc6060" fill-opacity="0.6"/>
<rect x="27.00" y="307.22" width="10.50" height="1.1" fill="#3f78c8" fill-opacity="0.6"/>
<rect x="39.60" y="307.22" width="1.05" height="1.1" fill="#9a8a70" fill-opacity="0.6"/>
<rect x="29.10" y="309.24" width="9.45" height="1.1" fill="#cc6060" fill-opacity="0.6"/>
<rect x="29.10" y="311.26" width="7.35" height="1.1" fill="#cc6060" fill-opacity="0.6"/>
<rect x="27.00" y="313.28" width="1.05" height="1.1" fill="#9a8a70" fill-opacity="0.6"/>
<rect x="27.00" y="315.30" width="12.60" height="1.1" fill="#3f78c8" fill-opacity="0.6"/>
<rect x="41.70" y="315.30" width="1.05" height="1.1" fill="#9a8a70" fill-opacity="0.6"/>
<rect x="29.10" y="317.32" width="9.45" height="1.1" fill="#3f78c8" fill-opacity="0.6"/>
<rect x="40.65" y="317.32" width="1.05" height="1.1" fill="#9a8a70" fill-opacity="0.6"/>
<rect x="31.20" y="319.34" width="6.30" height="1.1" fill="#3f78c8" fill-opacity="0.6"/>
<rect x="39.60" y="319.34" width="8.40" height="1.1" fill="#cc6060" fill-opacity="0.6"/>
<rect x="31.20" y="321.36" width="9.45" height="1.1" fill="#3f78c8" fill-opacity="0.6"/>
<rect x="42.75" y="321.36" width="19.95" height="1.1" fill="#cc6060" fill-opacity="0.6"/>
<rect x="29.10" y="323.38" width="1.05" height="1.1" fill="#9a8a70" fill-opacity="0.6"/>
<rect x="29.10" y="325.40" width="7.35" height="1.1" fill="#3f78c8" fill-opacity="0.6"/>
<rect x="38.55" y="325.40" width="1.05" height="1.1" fill="#9a8a70" fill-opacity="0.6"/>
<rect x="31.20" y="327.42" width="6.30" height="1.1" fill="#3f78c8" fill-opacity="0.6"/>
<rect x="39.60" y="327.42" width="8.40" height="1.1" fill="#cc6060" fill-opacity="0.6"/>
<rect x="31.20" y="329.44" width="11.55" height="1.1" fill="#3f78c8" fill-opacity="0.6"/>
<rect x="44.85" y="329.44" width="2.10" height="1.1" fill="#5fb08a" fill-opacity="0.6"/>
<rect x="31.20" y="331.46" width="11.55" height="1.1" fill="#3f78c8" fill-opacity="0.6"/>
<rect x="44.85" y="331.46" width="3.15" height="1.1" fill="#5fb08a" fill-opacity="0.6"/>
<rect x="31.20" y="333.48" width="9.45" height="1.1" fill="#3f78c8" fill-opacity="0.6"/>
<rect x="42.75" y="333.48" width="35.70" height="1.1" fill="#cc6060" fill-opacity="0.6"/>
<rect x="29.10" y="335.50" width="1.05" height="1.1" fill="#9a8a70" fill-opacity="0.6"/>
<rect x="29.10" y="337.52" width="5.25" height="1.1" fill="#3f78c8" fill-opacity="0.6"/>
<rect x="36.45" y="337.52" width="1.05" height="1.1" fill="#9a8a70" fill-opacity="0.6"/>
<rect x="31.20" y="339.54" width="6.30" height="1.1" fill="#3f78c8" fill-opacity="0.6"/>
<rect x="39.60" y="339.54" width="9.45" height="1.1" fill="#cc6060" fill-opacity="0.6"/>
<rect x="31.20" y="341.56" width="8.40" height="1.1" fill="#3f78c8" fill-opacity="0.6"/>
<rect x="41.70" y="341.56" width="7.35" height="1.1" fill="#cc6060" fill-opacity="0.6"/>
<rect x="31.20" y="343.58" width="9.45" height="1.1" fill="#3f78c8" fill-opacity="0.6"/>
<rect x="42.75" y="343.58" width="1.05" height="1.1" fill="#5fb08a" fill-opacity="0.6"/>
<rect x="29.10" y="345.60" width="1.05" height="1.1" fill="#9a8a70" fill-opacity="0.6"/>
<rect x="29.10" y="347.62" width="17.85" height="1.1" fill="#3f78c8" fill-opacity="0.6"/>
<rect x="49.05" y="347.62" width="1.05" height="1.1" fill="#9a8a70" fill-opacity="0.6"/>
<rect x="31.20" y="349.64" width="6.30" height="1.1" fill="#3f78c8" fill-opacity="0.6"/>
<rect x="39.60" y="349.64" width="8.40" height="1.1" fill="#cc6060" fill-opacity="0.6"/>
<rect x="31.20" y="351.66" width="8.40" height="1.1" fill="#3f78c8" fill-opacity="0.6"/>
<rect x="41.70" y="351.66" width="7.35" height="1.1" fill="#cc6060" fill-opacity="0.6"/>
<rect x="31.20" y="353.68" width="9.45" height="1.1" fill="#3f78c8" fill-opacity="0.6"/>
<rect x="42.75" y="353.68" width="1.05" height="1.1" fill="#5fb08a" fill-opacity="0.6"/>
<rect x="31.20" y="355.70" width="9.45" height="1.1" fill="#3f78c8" fill-opacity="0.6"/>
<rect x="42.75" y="355.70" width="4.20" height="1.1" fill="#5fb08a" fill-opacity="0.6"/>
<rect x="29.10" y="357.72" width="1.05" height="1.1" fill="#9a8a70" fill-opacity="0.6"/>
<rect x="29.10" y="359.74" width="10.50" height="1.1" fill="#3f78c8" fill-opacity="0.6"/>
<rect x="41.70" y="359.74" width="1.05" height="1.1" fill="#9a8a70" fill-opacity="0.6"/>
<rect x="31.20" y="361.76" width="6.30" height="1.1" fill="#3f78c8" fill-opacity="0.6"/>
<rect x="39.60" y="361.76" width="9.45" height="1.1" fill="#cc6060" fill-opacity="0.6"/>
<rect x="31.20" y="363.78" width="9.45" height="1.1" fill="#3f78c8" fill-opacity="0.6"/>
<rect x="42.75" y="363.78" width="5.25" height="1.1" fill="#6a6ae0" fill-opacity="0.6"/>
<rect x="29.10" y="365.80" width="1.05" height="1.1" fill="#9a8a70" fill-opacity="0.6"/>
<rect x="27.00" y="367.82" width="1.05" height="1.1" fill="#9a8a70" fill-opacity="0.6"/>
<rect x="24.90" y="369.84" width="1.05" height="1.1" fill="#9a8a70" fill-opacity="0.6"/>
<rect x="22.80" y="371.86" width="1.05" height="1.1" fill="#9a8a70" fill-opacity="0.6"/>
<rect x="20.70" y="373.88" width="1.05" height="1.1" fill="#9a8a70" fill-opacity="0.6"/>
<rect x="18.60" y="375.90" width="1.05" height="1.1" fill="#9a8a70" fill-opacity="0.6"/>
<rect x="18.60" y="377.92" width="5.25" height="1.1" fill="#3f78c8" fill-opacity="0.6"/>
<rect x="25.95" y="377.92" width="1.05" height="1.1" fill="#9a8a70" fill-opacity="0.6"/>
<rect x="20.70" y="379.94" width="13.65" height="1.1" fill="#3f78c8" fill-opacity="0.6"/>
<rect x="36.45" y="379.94" width="35.70" height="1.1" fill="#cc6060" fill-opacity="0.6"/>
<rect x="20.70" y="381.96" width="9.45" height="1.1" fill="#3f78c8" fill-opacity="0.6"/>
<rect x="32.25" y="381.96" width="1.05" height="1.1" fill="#9a8a70" fill-opacity="0.6"/>
<rect x="22.80" y="383.98" width="18.90" height="1.1" fill="#3f78c8" fill-opacity="0.6"/>
<rect x="43.80" y="383.98" width="1.05" height="1.1" fill="#9a8a70" fill-opacity="0.6"/>
<rect x="24.90" y="386.00" width="8.40" height="1.1" fill="#3f78c8" fill-opacity="0.6"/>
<rect x="35.40" y="386.00" width="1.05" height="1.1" fill="#9a8a70" fill-opacity="0.6"/>
<rect x="27.00" y="388.02" width="6.30" height="1.1" fill="#3f78c8" fill-opacity="0.6"/>
<rect x="35.40" y="388.02" width="35.70" height="1.1" fill="#cc6060" fill-opacity="0.6"/>
<rect x="24.90" y="390.04" width="1.05" height="1.1" fill="#9a8a70" fill-opacity="0.6"/>
<rect x="22.80" y="392.06" width="1.05" height="1.1" fill="#9a8a70" fill-opacity="0.6"/>
<rect x="20.70" y="394.08" width="1.05" height="1.1" fill="#9a8a70" fill-opacity="0.6"/>
<rect x="18.60" y="396.10" width="1.05" height="1.1" fill="#9a8a70" fill-opacity="0.6"/>
<rect x="16.50" y="398.12" width="1.05" height="1.1" fill="#9a8a70" fill-opacity="0.6"/>
<rect x="16.50" y="400.14" width="10.50" height="1.1" fill="#3f78c8" fill-opacity="0.6"/>
<rect x="29.10" y="400.14" width="1.05" height="1.1" fill="#9a8a70" fill-opacity="0.6"/>
<rect x="30.15" y="400.14" width="1.05" height="1.1" fill="#9a8a70" fill-opacity="0.6"/>
<rect x="14.40" y="402.16" width="1.05" height="1.1" fill="#9a8a70" fill-opacity="0.6"/>
<rect x="12.30" y="404.18" width="1.05" height="1.1" fill="#9a8a70" fill-opacity="0.6"/>
<rect x="12.30" y="406.20" width="17.85" height="1.1" fill="#3f78c8" fill-opacity="0.6"/>
<rect x="32.25" y="406.20" width="1.05" height="1.1" fill="#9a8a70" fill-opacity="0.6"/>
<rect x="14.40" y="408.22" width="5.25" height="1.1" fill="#3f78c8" fill-opacity="0.6"/>
<rect x="21.75" y="408.22" width="1.05" height="1.1" fill="#9a8a70" fill-opacity="0.6"/>
<rect x="16.50" y="410.24" width="6.30" height="1.1" fill="#3f78c8" fill-opacity="0.6"/>
<rect x="24.90" y="410.24" width="1.05" height="1.1" fill="#9a8a70" fill-opacity="0.6"/>
<rect x="18.60" y="412.26" width="7.35" height="1.1" fill="#cc6060" fill-opacity="0.6"/>
<rect x="16.50" y="414.28" width="1.05" height="1.1" fill="#9a8a70" fill-opacity="0.6"/>
<rect x="16.50" y="416.30" width="9.45" height="1.1" fill="#3f78c8" fill-opacity="0.6"/>
<rect x="28.05" y="416.30" width="24.15" height="1.1" fill="#cc6060" fill-opacity="0.6"/>
<rect x="16.50" y="418.32" width="13.65" height="1.1" fill="#3f78c8" fill-opacity="0.6"/>
<rect x="32.25" y="418.32" width="35.70" height="1.1" fill="#cc6060" fill-opacity="0.6"/>
<rect x="16.50" y="420.34" width="13.65" height="1.1" fill="#3f78c8" fill-opacity="0.6"/>
<rect x="32.25" y="420.34" width="14.70" height="1.1" fill="#cc6060" fill-opacity="0.6"/>
<rect x="16.50" y="422.36" width="13.65" height="1.1" fill="#3f78c8" fill-opacity="0.6"/>
<rect x="32.25" y="422.36" width="1.05" height="1.1" fill="#9a8a70" fill-opacity="0.6"/>
<rect x="18.60" y="424.38" width="9.45" height="1.1" fill="#3f78c8" fill-opacity="0.6"/>
<rect x="30.15" y="424.38" width="1.05" height="1.1" fill="#9a8a70" fill-opacity="0.6"/>
<rect x="20.70" y="426.40" width="18.90" height="1.1" fill="#3f78c8" fill-opacity="0.6"/>
<rect x="41.70" y="426.40" width="1.05" height="1.1" fill="#9a8a70" fill-opacity="0.6"/>
<rect x="22.80" y="428.42" width="8.40" height="1.1" fill="#3f78c8" fill-opacity="0.6"/>
<rect x="33.30" y="428.42" width="1.05" height="1.1" fill="#9a8a70" fill-opacity="0.6"/>
<rect x="24.90" y="430.44" width="6.30" height="1.1" fill="#3f78c8" fill-opacity="0.6"/>
<rect x="33.30" y="430.44" width="35.70" height="1.1" fill="#cc6060" fill-opacity="0.6"/>
<rect x="22.80" y="432.46" width="1.05" height="1.1" fill="#9a8a70" fill-opacity="0.6"/>
<rect x="20.70" y="434.48" width="1.05" height="1.1" fill="#9a8a70" fill-opacity="0.6"/>
<rect x="18.60" y="436.50" width="1.05" height="1.1" fill="#9a8a70" fill-opacity="0.6"/>
<rect x="18.60" y="438.52" width="10.50" height="1.1" fill="#3f78c8" fill-opacity="0.6"/>
<rect x="31.20" y="438.52" width="4.20" height="1.1" fill="#6a6ae0" fill-opacity="0.6"/>
<rect x="16.50" y="440.54" width="1.05" height="1.1" fill="#9a8a70" fill-opacity="0.6"/>
<rect x="16.50" y="442.56" width="11.55" height="1.1" fill="#3f78c8" fill-opacity="0.6"/>
<rect x="30.15" y="442.56" width="1.05" height="1.1" fill="#9a8a70" fill-opacity="0.6"/>
<rect x="18.60" y="444.58" width="5.25" height="1.1" fill="#3f78c8" fill-opacity="0.6"/>
<rect x="25.95" y="444.58" width="1.05" height="1.1" fill="#9a8a70" fill-opacity="0.6"/>
<rect x="20.70" y="446.60" width="13.65" height="1.1" fill="#3f78c8" fill-opacity="0.6"/>
<rect x="36.45" y="446.60" width="19.95" height="1.1" fill="#cc6060" fill-opacity="0.6"/>
<rect x="20.70" y="448.62" width="9.45" height="1.1" fill="#3f78c8" fill-opacity="0.6"/>
<rect x="32.25" y="448.62" width="1.05" height="1.1" fill="#9a8a70" fill-opacity="0.6"/>
<rect x="22.80" y="450.64" width="18.90" height="1.1" fill="#3f78c8" fill-opacity="0.6"/>
<rect x="43.80" y="450.64" width="1.05" height="1.1" fill="#9a8a70" fill-opacity="0.6"/>
<rect x="24.90" y="452.66" width="8.40" height="1.1" fill="#3f78c8" fill-opacity="0.6"/>
<rect x="35.40" y="452.66" width="1.05" height="1.1" fill="#9a8a70" fill-opacity="0.6"/>
<rect x="27.00" y="454.68" width="6.30" height="1.1" fill="#3f78c8" fill-opacity="0.6"/>
<rect x="35.40" y="454.68" width="34.65" height="1.1" fill="#cc6060" fill-opacity="0.6"/>
<rect x="24.90" y="456.70" width="1.05" height="1.1" fill="#9a8a70" fill-opacity="0.6"/>
<rect x="22.80" y="458.72" width="1.05" height="1.1" fill="#9a8a70" fill-opacity="0.6"/>
<rect x="20.70" y="460.74" width="1.05" height="1.1" fill="#9a8a70" fill-opacity="0.6"/>
<rect x="18.60" y="462.76" width="1.05" height="1.1" fill="#9a8a70" fill-opacity="0.6"/>
<rect x="18.60" y="464.78" width="5.25" height="1.1" fill="#3f78c8" fill-opacity="0.6"/>
<rect x="25.95" y="464.78" width="1.05" height="1.1" fill="#9a8a70" fill-opacity="0.6"/>
<rect x="20.70" y="466.80" width="13.65" height="1.1" fill="#3f78c8" fill-opacity="0.6"/>
<rect x="36.45" y="466.80" width="16.80" height="1.1" fill="#cc6060" fill-opacity="0.6"/>
<rect x="20.70" y="468.82" width="9.45" height="1.1" fill="#3f78c8" fill-opacity="0.6"/>
<rect x="32.25" y="468.82" width="1.05" height="1.1" fill="#9a8a70" fill-opacity="0.6"/>
<rect x="22.80" y="470.84" width="18.90" height="1.1" fill="#3f78c8" fill-opacity="0.6"/>
<rect x="43.80" y="470.84" width="1.05" height="1.1" fill="#9a8a70" fill-opacity="0.6"/>
<rect x="24.90" y="472.86" width="8.40" height="1.1" fill="#3f78c8" fill-opacity="0.6"/>
<rect x="35.40" y="472.86" width="1.05" height="1.1" fill="#9a8a70" fill-opacity="0.6"/>
<rect x="27.00" y="474.88" width="6.30" height="1.1" fill="#3f78c8" fill-opacity="0.6"/>
<rect x="35.40" y="474.88" width="35.70" height="1.1" fill="#cc6060" fill-opacity="0.6"/>
<rect x="24.90" y="476.90" width="1.05" height="1.1" fill="#9a8a70" fill-opacity="0.6"/>
<rect x="22.80" y="478.92" width="1.05" height="1.1" fill="#9a8a70" fill-opacity="0.6"/>
<rect x="20.70" y="480.94" width="1.05" height="1.1" fill="#9a8a70" fill-opacity="0.6"/>
<rect x="18.60" y="482.96" width="1.05" height="1.1" fill="#9a8a70" fill-opacity="0.6"/>
<rect x="16.50" y="484.98" width="1.05" height="1.1" fill="#9a8a70" fill-opacity="0.6"/>
<rect x="14.40" y="487.00" width="1.05" height="1.1" fill="#9a8a70" fill-opacity="0.6"/>
<rect x="12.30" y="489.02" width="1.05" height="1.1" fill="#9a8a70" fill-opacity="0.6"/>
<rect x="12.30" y="491.04" width="12.60" height="1.1" fill="#3f78c8" fill-opacity="0.6"/>
<rect x="27.00" y="491.04" width="1.05" height="1.1" fill="#9a8a70" fill-opacity="0.6"/>
<rect x="14.40" y="493.06" width="5.25" height="1.1" fill="#3f78c8" fill-opacity="0.6"/>
<rect x="21.75" y="493.06" width="1.05" height="1.1" fill="#9a8a70" fill-opacity="0.6"/>
<rect x="16.50" y="495.08" width="6.30" height="1.1" fill="#3f78c8" fill-opacity="0.6"/>
<rect x="24.90" y="495.08" width="1.05" height="1.1" fill="#9a8a70" fill-opacity="0.6"/>
<rect x="18.60" y="497.10" width="7.35" height="1.1" fill="#cc6060" fill-opacity="0.6"/>
<rect x="16.50" y="499.12" width="1.05" height="1.1" fill="#9a8a70" fill-opacity="0.6"/>
<rect x="16.50" y="501.14" width="9.45" height="1.1" fill="#3f78c8" fill-opacity="0.6"/>
<rect x="28.05" y="501.14" width="23.10" height="1.1" fill="#cc6060" fill-opacity="0.6"/>
<rect x="16.50" y="503.16" width="13.65" height="1.1" fill="#3f78c8" fill-opacity="0.6"/>
<rect x="32.25" y="503.16" width="27.30" height="1.1" fill="#cc6060" fill-opacity="0.6"/>
<rect x="16.50" y="505.18" width="13.65" height="1.1" fill="#3f78c8" fill-opacity="0.6"/>
<rect x="32.25" y="505.18" width="10.50" height="1.1" fill="#cc6060" fill-opacity="0.6"/>
<rect x="16.50" y="507.20" width="11.55" height="1.1" fill="#3f78c8" fill-opacity="0.6"/>
<rect x="30.15" y="507.20" width="1.05" height="1.1" fill="#9a8a70" fill-opacity="0.6"/>
<rect x="18.60" y="509.22" width="5.25" height="1.1" fill="#3f78c8" fill-opacity="0.6"/>
<rect x="25.95" y="509.22" width="1.05" height="1.1" fill="#9a8a70" fill-opacity="0.6"/>
<rect x="20.70" y="511.24" width="13.65" height="1.1" fill="#3f78c8" fill-opacity="0.6"/>
<rect x="36.45" y="511.24" width="12.60" height="1.1" fill="#cc6060" fill-opacity="0.6"/>
<rect x="20.70" y="513.26" width="9.45" height="1.1" fill="#3f78c8" fill-opacity="0.6"/>
<rect x="32.25" y="513.26" width="1.05" height="1.1" fill="#9a8a70" fill-opacity="0.6"/>
<rect x="22.80" y="515.28" width="18.90" height="1.1" fill="#3f78c8" fill-opacity="0.6"/>
<rect x="43.80" y="515.28" width="1.05" height="1.1" fill="#9a8a70" fill-opacity="0.6"/>
<rect x="24.90" y="517.30" width="8.40" height="1.1" fill="#3f78c8" fill-opacity="0.6"/>
<rect x="35.40" y="517.30" width="1.05" height="1.1" fill="#9a8a70" fill-opacity="0.6"/>
<rect x="27.00" y="519.32" width="6.30" height="1.1" fill="#3f78c8" fill-opacity="0.6"/>
<rect x="35.40" y="519.32" width="7.35" height="1.1" fill="#cc6060" fill-opacity="0.6"/>
<rect x="27.00" y="521.34" width="7.35" height="1.1" fill="#3f78c8" fill-opacity="0.6"/>
<rect x="36.45" y="521.34" width="1.05" height="1.1" fill="#9a8a70" fill-opacity="0.6"/>
<rect x="29.10" y="523.36" width="6.30" height="1.1" fill="#3f78c8" fill-opacity="0.6"/>
<rect x="37.50" y="523.36" width="33.60" height="1.1" fill="#cc6060" fill-opacity="0.6"/>
<rect x="27.00" y="525.38" width="1.05" height="1.1" fill="#9a8a70" fill-opacity="0.6"/>
<rect x="24.90" y="527.40" width="1.05" height="1.1" fill="#9a8a70" fill-opacity="0.6"/>
<rect x="22.80" y="529.42" width="1.05" height="1.1" fill="#9a8a70" fill-opacity="0.6"/>
<rect x="20.70" y="531.44" width="1.05" height="1.1" fill="#9a8a70" fill-opacity="0.6"/>
<rect x="18.60" y="533.46" width="1.05" height="1.1" fill="#9a8a70" fill-opacity="0.6"/>
<rect x="18.60" y="535.48" width="5.25" height="1.1" fill="#3f78c8" fill-opacity="0.6"/>
<rect x="25.95" y="535.48" width="1.05" height="1.1" fill="#9a8a70" fill-opacity="0.6"/>
<rect x="20.70" y="537.50" width="13.65" height="1.1" fill="#3f78c8" fill-opacity="0.6"/>
<rect x="36.45" y="537.50" width="16.80" height="1.1" fill="#cc6060" fill-opacity="0.6"/>
<rect x="20.70" y="539.52" width="9.45" height="1.1" fill="#3f78c8" fill-opacity="0.6"/>
<rect x="32.25" y="539.52" width="1.05" height="1.1" fill="#9a8a70" fill-opacity="0.6"/>
<rect x="22.80" y="541.54" width="18.90" height="1.1" fill="#3f78c8" fill-opacity="0.6"/>
<rect x="43.80" y="541.54" width="1.05" height="1.1" fill="#9a8a70" fill-opacity="0.6"/>
<rect x="24.90" y="543.56" width="8.40" height="1.1" fill="#3f78c8" fill-opacity="0.6"/>
<rect x="35.40" y="543.56" width="1.05" height="1.1" fill="#9a8a70" fill-opacity="0.6"/>
<rect x="27.00" y="545.58" width="6.30" height="1.1" fill="#3f78c8" fill-opacity="0.6"/>
<rect x="35.40" y="545.58" width="35.70" height="1.1" fill="#cc6060" fill-opacity="0.6"/>
<rect x="24.90" y="547.60" width="1.05" height="1.1" fill="#9a8a70" fill-opacity="0.6"/>
<rect x="22.80" y="549.62" width="1.05" height="1.1" fill="#9a8a70" fill-opacity="0.6"/>
</svg>
<div class="a" style="left:1196px;top:110px;width:1px;height:544px;background:#e3e3e3"></div>
<div class="a" style="left:1196px;top:195px;width:17px;height:2.2px;background:#3a3a3a"></div>
<div class="a" style="left:112.2px;top:55.6px;font-size:13.4px;line-height:16px;color:#616161;letter-spacing:-0.55px">EXPLORER</div>
<div class="a" style="left:391.0px;top:60.8px;width:3px;height:3px;border-radius:50%;background:#424242"></div>
<div class="a" style="left:396.9px;top:60.8px;width:3px;height:3px;border-radius:50%;background:#424242"></div>
<div class="a" style="left:402.8px;top:60.8px;width:3px;height:3px;border-radius:50%;background:#424242"></div>
<svg class="a" style="left:93.0px;top:92.2px" width="14" height="10" viewBox="0 0 14 10"><path d="M1.5 2 L7 7.3 L12.5 2" fill="none" stroke="#424242" stroke-width="1.3"/></svg>
<div class="a" style="left:112.2px;top:89.9px;font-size:13.2px;line-height:16px;color:#616161;font-weight:bold;letter-spacing:0.3px">APISECURITY-TUTORIAL</div>
<div class="a" style="left:88px;top:242px;width:338px;height:26.4px;background:#e4e6f1"></div>
<div class="a" style="left:112.3px;top:216px;width:1px;height:52.4px;background:#a9a9a9"></div>
<div class="a" style="left:396.5px;top:118.5px;width:9px;height:9px;border-radius:50%;background:#c8b690"></div>
<svg class="a" style="left:110.8px;top:116.6px" width="10" height="14" viewBox="0 0 10 14"><path d="M1.8 2 L7 7 L1.8 12" fill="none" stroke="#424242" stroke-width="1.25"/></svg>
<div class="row" style="left:128.6px;top:111.1px;letter-spacing:0.8px;color:#895503;">.42c</div>
<svg class="a" style="left:110.8px;top:143.0px" width="10" height="14" viewBox="0 0 10 14"><path d="M1.8 2 L7 7 L1.8 12" fill="none" stroke="#424242" stroke-width="1.25"/></svg>
<div class="row" style="left:128.6px;top:137.5px;letter-spacing:0.62px;">.github</div>
<svg class="a" style="left:110.8px;top:169.4px" width="10" height="14" viewBox="0 0 10 14"><path d="M1.8 2 L7 7 L1.8 12" fill="none" stroke="#424242" stroke-width="1.25"/></svg>
<div class="row" style="left:128.6px;top:163.9px;letter-spacing:0.29px;">.vscode</div>
<svg class="a" style="left:108.4px;top:197.8px" width="14" height="10" viewBox="0 0 14 10"><path d="M1.5 2 L7 7.3 L12.5 2" fill="none" stroke="#424242" stroke-width="1.25"/></svg>
<div class="row" style="left:128.8px;top:190.3px;letter-spacing:0.57px;">api-specifications</div>
<svg class="a" style="left:116.2px;top:221.7px" width="15" height="15" viewBox="0 0 15 15"><path d="M5.2 1.3 Q3.3 1.3 3.3 3.2 L3.3 5.6 Q3.3 7.3 1.3 7.4 Q3.3 7.5 3.3 9.2 L3.3 11.7 Q3.3 13.6 5.2 13.6" fill="none" stroke="#b0b33a" stroke-width="1.5"/><path d="M9.4 1.3 Q11.3 1.3 11.3 3.2 L11.3 5.6 Q11.3 7.3 13.3 7.4 Q11.3 7.5 11.3 9.2 L11.3 11.7 Q11.3 13.6 9.4 13.6" fill="none" stroke="#b0b33a" stroke-width="1.5"/></svg>
<div class="row" style="left:138.2px;top:216.7px;letter-spacing:0.3px;">OpenWeather.json</div>
<svg class="a" style="left:116.2px;top:248.1px" width="15" height="15" viewBox="0 0 15 15"><path d="M5.2 1.3 Q3.3 1.3 3.3 3.2 L3.3 5.6 Q3.3 7.3 1.3 7.4 Q3.3 7.5 3.3 9.2 L3.3 11.7 Q3.3 13.6 5.2 13.6" fill="none" stroke="#b0b33a" stroke-width="1.5"/><path d="M9.4 1.3 Q11.3 1.3 11.3 3.2 L11.3 5.6 Q11.3 7.3 13.3 7.4 Q11.3 7.5 11.3 9.2 L11.3 11.7 Q11.3 13.6 9.4 13.6" fill="none" stroke="#b0b33a" stroke-width="1.5"/></svg>
<div class="row" style="left:138.3px;top:243.1px;letter-spacing:0.31px;">PhotoManager.json</div>
<svg class="a" style="left:110.8px;top:275.0px" width="10" height="14" viewBox="0 0 10 14"><path d="M1.8 2 L7 7 L1.8 12" fill="none" stroke="#424242" stroke-width="1.25"/></svg>
<div class="row" style="left:128.6px;top:269.5px;letter-spacing:0.54px;">graphics</div>
<svg class="a" style="left:107px;top:300.2px" width="15" height="15" viewBox="0 0 15 15"><path d="M7.3 0.4 L14 7.2 L7.3 13.9 L0.6 7.2 Z" fill="#3e4b53" stroke="#3e4b53" stroke-width="0.8" stroke-linejoin="round"/><path d="M5 3.6 L9.3 7.9 M7.2 5.8 L7.2 10.8" stroke="#e8e8e8" stroke-width="1.1"/><circle cx="9.4" cy="8" r="1" fill="#e8e8e8"/><circle cx="7.2" cy="10.6" r="1" fill="#e8e8e8"/></svg>
<div class="row" style="left:128.6px;top:295.9px;letter-spacing:0.54px;">.gitignore</div>
<svg class="a" style="left:105.5px;top:329.2px" width="18" height="12" viewBox="0 0 18 12"><path d="M0.4 5.2 L13.6 5.2 Q14.6 3.6 17.4 3 Q17 5 15.8 6 Q14 11 8 11.2 Q1.5 11.2 0.4 5.2 Z" fill="#d93a6f"/><rect x="3.4" y="2.6" width="2.2" height="2.2" fill="#d93a6f"/><rect x="6" y="2.6" width="2.2" height="2.2" fill="#d93a6f"/><rect x="8.6" y="2.6" width="2.2" height="2.2" fill="#d93a6f"/><rect x="6" y="0" width="2.2" height="2.2" fill="#d93a6f"/><circle cx="4" cy="7.5" r="0.7" fill="#f3f3f3"/></svg>
<div class="row" style="left:128.8px;top:322.3px;letter-spacing:0.44px;">docker-compose.yaml</div>
<svg class="a" style="left:108.5px;top:352.0px" width="12" height="18" viewBox="0 0 12 18"><circle cx="6" cy="3.6" r="2.6" fill="none" stroke="#a3b23e" stroke-width="1.5"/><path d="M3.6 5.2 L2.2 16.5 L4.2 15.5 L4.5 13 L3.8 12 L4.6 11 L4.5 8.5 L5.5 6 Z" fill="#a3b23e"/><path d="M7 6 L6.2 10 L8.5 16.8 L10.2 15.6 L9.5 13.5 L10 12.5 L9 11 L8.8 6 Z" fill="#a3b23e"/></svg>
<div class="row" style="left:128.8px;top:348.7px;letter-spacing:-0.45px;">LICENSE</div>
<div class="row" style="left:128.8px;top:375.1px;letter-spacing:-0.15px;">README.md</div>
<div class="a" style="left:88px;top:601px;width:338px;height:1px;background:#d9d9d9"></div>
<div class="a" style="left:88px;top:628px;width:338px;height:1px;background:#d9d9d9"></div>
<svg class="a" style="left:96.0px;top:608.2px" width="10" height="14" viewBox="0 0 10 14"><path d="M1.8 2 L7 7 L1.8 12" fill="none" stroke="#424242" stroke-width="1.3"/></svg>
<svg class="a" style="left:96.0px;top:634.5px" width="10" height="14" viewBox="0 0 10 14"><path d="M1.8 2 L7 7 L1.8 12" fill="none" stroke="#424242" stroke-width="1.3"/></svg>
<div class="a" style="left:112.1px;top:607.7px;font-size:13.2px;line-height:16px;color:#616161;font-weight:bold;letter-spacing:0.15px">OUTLINE</div>
<div class="a" style="left:112.1px;top:634px;font-size:13.2px;line-height:16px;color:#616161;font-weight:bold;letter-spacing:0.15px">TIMELINE</div>
<svg class="a" style="left:36px;top:45px" width="50" height="50" viewBox="0 0 50 50"><g transform="translate(22.7 24.2) scale(0.93) translate(-22.7 -24.2)"><path d="M17.5 17.8 L12.4 17.8 Q10.6 17.8 10.6 19.6 L10.6 36.9 Q10.6 38.7 12.4 38.7 L24.8 38.7 Q26.6 38.7 26.6 36.9 L26.6 31.4" fill="none" stroke="#fff" stroke-width="1.8"/><path d="M19.2 9.7 L29.6 9.7 L34.8 14.9 L34.8 29.7 Q34.8 31.5 33 31.5 L19.2 31.5 Q17.4 31.5 17.4 29.7 L17.4 11.5 Q17.4 9.7 19.2 9.7 Z" fill="none" stroke="#fff" stroke-width="1.8"/><path d="M29 10 L29 15.5 L34.5 15.5" fill="none" stroke="#fff" stroke-width="1.9"/></g></svg>
<svg class="a" style="left:36px;top:100px" width="50" height="50" viewBox="0 0 50 50"><circle cx="26.6" cy="22.6" r="8.8" fill="none" stroke="#858585" stroke-width="1.7"/><path d="M20.4 28.8 L10.6 40.6" stroke="#858585" stroke-width="1.8"/></svg>
<svg class="a" style="left:36px;top:160px" width="50" height="50" viewBox="0 0 50 50"><circle cx="16.1" cy="15" r="3.2" fill="none" stroke="#858585" stroke-width="1.7"/><circle cx="16.1" cy="35.2" r="3.2" fill="none" stroke="#858585" stroke-width="1.7"/><circle cx="29" cy="20.6" r="3.2" fill="none" stroke="#858585" stroke-width="1.7"/><path d="M16.1 18.2 L16.1 32 M29 23.8 Q29 29 22 29.5 Q17 30 16.5 32" fill="none" stroke="#858585" stroke-width="1.7"/></svg>
<div class="a" style="left:58.8px;top:185.7px;width:19px;height:19px;border-radius:50%;background:#007acc;color:#fff;font-size:12px;font-weight:bold;line-height:19px;text-align:center">1</div>
<svg class="a" style="left:36px;top:215px" width="50" height="50" viewBox="0 0 50 50"><path d="M17.7 25.8 L17.7 13.7 L36.8 25 L24.2 33" fill="none" stroke="#858585" stroke-width="1.7"/><ellipse cx="16.1" cy="35" rx="4" ry="5" fill="none" stroke="#858585" stroke-width="1.7"/><path d="M12 34.5 L20.2 34.5 M10 31.5 L12.5 32.5 M22.2 31.5 L19.7 32.5 M9.8 36.5 L12.2 36.5 M22.4 36.5 L20 36.5 M10.3 41.5 L12.8 39.5 M21.9 41.5 L19.4 39.5 M13.5 29.5 L14.5 30.5 M18.7 29.5 L17.7 30.5" fill="none" stroke="#858585" stroke-width="1.5"/></svg>
<svg class="a" style="left:36px;top:270px" width="50" height="50" viewBox="0 0 50 50"><path d="M9.8 22.3 L20 22.3 L20 32.5 L30.5 32.5 L30.5 43.3 L9.8 43.3 Z M9.8 32.5 L20 32.5 L20 43.3" fill="none" stroke="#858585" stroke-width="1.7" stroke-linejoin="round"/><rect x="25.6" y="16.8" width="10.6" height="10.4" rx="1" fill="none" stroke="#858585" stroke-width="1.7"/></svg>
<div class="a" style="left:45.6px;top:346.5px;width:25.2px;height:20px;border:1.6px solid #8a8a8a;border-radius:1px"></div>
<svg class="a" style="left:36px;top:540px" width="50" height="50" viewBox="0 0 50 50"><circle cx="22.8" cy="26.3" r="13" fill="none" stroke="#858585" stroke-width="1.8"/><circle cx="22.8" cy="23" r="5.3" fill="none" stroke="#858585" stroke-width="1.8"/><path d="M13.8 35.5 Q16.5 29.5 22.8 29.2 Q29.1 29.5 31.8 35.5" fill="none" stroke="#858585" stroke-width="1.8"/></svg>
<svg class="a" style="left:36px;top:600px" width="50" height="50" viewBox="0 0 50 50"><path d="M20.93 10.92 L24.67 10.92 L25.46 15.15 L27.91 16.17 L31.43 13.73 L34.07 16.37 L31.64 19.92 L32.66 22.37 L36.88 23.13 L36.88 26.87 L32.65 27.66 L31.63 30.11 L34.07 33.63 L31.43 36.27 L27.88 33.84 L25.43 34.86 L24.67 39.08 L20.93 39.08 L20.14 34.85 L17.69 33.83 L14.17 36.27 L11.53 33.63 L13.96 30.08 L12.94 27.63 L8.72 26.87 L8.72 23.13 L12.95 22.34 L13.97 19.89 L11.53 16.37 L14.17 13.73 L17.72 16.16 L20.17 15.14 Z" fill="none" stroke="#858585" stroke-width="1.7" stroke-linejoin="round"/><circle cx="22.8" cy="25" r="3.2" fill="none" stroke="#858585" stroke-width="1.7"/></svg>
<div class="a" style="left:24px;top:355px;width:8px;height:7px;background:#c2c2c2"></div>
<div class="a" style="left:16px;top:362px;width:16px;height:8px;background:#c2c2c2"></div>
<div class="a" style="left:8px;top:370px;width:24px;height:8px;background:#c2c2c2"></div>
<div class="a" style="left:0px;top:378px;width:32px;height:79px;background:#c2c2c2"></div>
<div class="a" style="left:8px;top:457px;width:24px;height:8px;background:#c2c2c2"></div>
<div class="a" style="left:16px;top:465px;width:16px;height:7px;background:#c2c2c2"></div>
<div class="a" style="left:24px;top:472px;width:8px;height:7px;background:#c2c2c2"></div>
<svg class="a" style="left:0px;top:351px" width="133" height="134" viewBox="0 0 133 134">
<defs><clipPath id="cc"><circle cx="65.5" cy="67" r="63"/></clipPath></defs>
<g clip-path="url(#cc)">
<rect x="0" y="0" width="133" height="134" fill="#2b2b2b"/>
<rect x="112" y="0" width="30" height="134" fill="#f2f2f2"/>
<rect x="27.6" y="38.4" width="54.8" height="51" rx="3" fill="none" stroke="#6a6a6a" stroke-width="2.8"/>
<rect x="27.6" y="38.4" width="54.8" height="9.2" fill="#6a6a6a"/>
<circle cx="68.5" cy="43" r="1.5" fill="#2b2b2b"/><circle cx="73.5" cy="43" r="1.5" fill="#2b2b2b"/><circle cx="78.5" cy="43" r="1.5" fill="#2b2b2b"/>
<text x="35" y="76.5" font-family="Liberation Sans" font-weight="bold" font-size="26" fill="#6a6a6a" stroke="#6a6a6a" stroke-width="0.9" textLength="38.5" lengthAdjust="spacingAndGlyphs">/API</text>
</g>
<circle cx="65.5" cy="67" r="63" fill="none" stroke="#1a1a1a" stroke-opacity="0.6" stroke-width="5.4"/>
<circle cx="65.5" cy="67" r="63" fill="none" stroke="#f3c22b" stroke-width="4"/>
</svg>
<div class="a" id="status"></div>
<div class="a" id="remote"></div>
<svg class="a" style="left:42px;top:656px" width="18" height="22" viewBox="0 0 18 22"><path d="M3.3 7.9 L7.7 12.2 L3.3 16.6 M13.5 3.4 L8.8 7.9 L13.5 12.6" fill="none" stroke="#d8fbe9" stroke-width="1.3"/></svg>
<svg class="a" style="left:78px;top:657px" width="16" height="19" viewBox="0 0 16 19"><circle cx="3.8" cy="3.2" r="2.2" fill="none" stroke="#fff" stroke-width="1.3"/><circle cx="3.8" cy="15.2" r="2.2" fill="none" stroke="#fff" stroke-width="1.3"/><circle cx="12" cy="6.2" r="2.2" fill="none" stroke="#fff" stroke-width="1.3"/><path d="M3.8 5.4 L3.8 13 M12 8.4 Q12 10.5 8 11 Q4.5 11.5 4 13" fill="none" stroke="#fff" stroke-width="1.3"/></svg>
<div class="st" style="left:99px;letter-spacing:0.55px">main*</div>
<svg class="a" style="left:144px;top:658px" width="19" height="18" viewBox="0 0 19 18"><path d="M3 9 A6.3 6.3 0 0 1 14.5 5.5 M16 9 A6.3 6.3 0 0 1 4.5 12.5" fill="none" stroke="#fff" stroke-width="1.4"/><path d="M14.8 2.5 L15 6 L11.5 6.3 M4.2 15.5 L4 12 L7.5 11.7" fill="none" stroke="#fff" stroke-width="1.4"/></svg>
<svg class="a" style="left:179px;top:659px" width="17" height="17" viewBox="0 0 17 17"><circle cx="8.3" cy="8" r="7" fill="none" stroke="#fff" stroke-width="1.3"/><path d="M5.5 5.2 L11.1 10.8 M11.1 5.2 L5.5 10.8" stroke="#fff" stroke-width="1.3"/></svg>
<div class="st" style="left:199.5px">0</div>
<svg class="a" style="left:213px;top:658px" width="17" height="16" viewBox="0 0 17 16"><path d="M8.2 1.3 L15.3 14.3 L1.1 14.3 Z" fill="none" stroke="#fff" stroke-width="1.3" stroke-linejoin="round"/><path d="M8.2 5.5 L8.2 10" stroke="#fff" stroke-width="1.3"/><circle cx="8.2" cy="12" r="0.8" fill="#fff"/></svg>
<div class="st" style="left:233.5px">0</div>
<svg class="a" style="left:262px;top:658px" width="17" height="17" viewBox="0 0 17 17"><circle cx="8.5" cy="6" r="1.5" fill="none" stroke="#fff" stroke-width="1.2"/><path d="M8.5 7.5 L5.5 16 M8.5 7.5 L11.5 16 M6.5 12.5 L10.5 12.5 M5 2.5 Q3 6 5 9.5 M12 2.5 Q14 6 12 9.5 M2.5 1 Q-0.5 6 2.5 11 M14.5 1 Q17.5 6 14.5 11" fill="none" stroke="#fff" stroke-width="1.2"/></svg>
<div class="st" style="left:283px">0</div>
<div class="st" style="left:760.3px;letter-spacing:0.45px">Ln 135, Col 20</div>
<div class="st" style="left:880.4px;letter-spacing:0.15px">Spaces: 2</div>
<div class="st" style="left:967.3px;letter-spacing:0.15px">UTF-8</div>
<div class="st" style="left:1030.4px;letter-spacing:-0.6px">LF</div>
<svg class="a" style="left:1064.0px;top:659.0px" width="15" height="15" viewBox="0 0 15 15"><path d="M5.2 1.3 Q3.3 1.3 3.3 3.2 L3.3 5.6 Q3.3 7.3 1.3 7.4 Q3.3 7.5 3.3 9.2 L3.3 11.7 Q3.3 13.6 5.2 13.6" fill="none" stroke="#fff" stroke-width="1.5"/><path d="M9.4 1.3 Q11.3 1.3 11.3 3.2 L11.3 5.6 Q11.3 7.3 13.3 7.4 Q11.3 7.5 11.3 9.2 L11.3 11.7 Q11.3 13.6 9.4 13.6" fill="none" stroke="#fff" stroke-width="1.5"/></svg>
<div class="st" style="left:1087px">JSON</div>
<svg class="a" style="left:1141px;top:659px" width="20" height="17" viewBox="0 0 20 17"><circle cx="11.5" cy="4.5" r="2.7" fill="none" stroke="#fff" stroke-width="1.5"/><path d="M6 6.5 Q1 8 2 12 Q4 15.5 10 15 Q16 14.5 17.5 11 Q18 9 16 7.5" fill="none" stroke="#fff" stroke-width="1.5"/><path d="M3 1.5 L17.5 15.5" stroke="#fff" stroke-width="1.5"/></svg>
<svg class="a" style="left:1180px;top:658px" width="15" height="17" viewBox="0 0 15 17"><path d="M1.3 13.2 L1.3 12 Q2.8 11 2.8 8.5 L2.8 6 Q2.8 1.2 7.5 1.2 Q12.2 1.2 12.2 6 L12.2 8.5 Q12.2 11 13.7 12 L13.7 13.2 Z" fill="none" stroke="#fff" stroke-width="1.3" stroke-linejoin="round"/><path d="M5.8 13.5 Q5.8 15.3 7.5 15.3 Q9.2 15.3 9.2 13.5" fill="none" stroke="#fff" stroke-width="1.3"/></svg>
</body></html>
